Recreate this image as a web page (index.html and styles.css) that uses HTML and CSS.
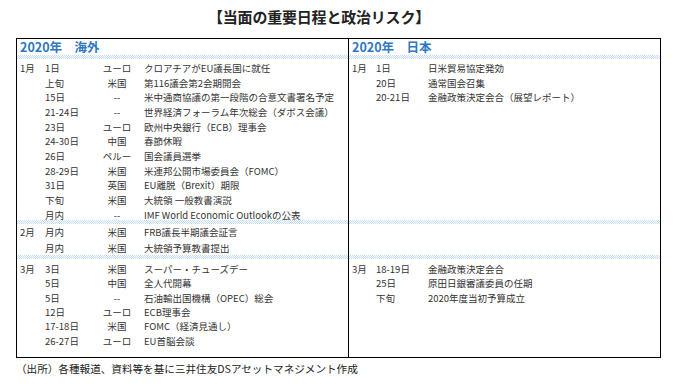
FILE: index.html
```html
<!DOCTYPE html>
<html lang="ja">
<head>
<meta charset="utf-8">
<link rel="stylesheet" href="styles.css">
</head>
<body>
<div class="page">
  <h1 class="title">【当面の重要日程と政治リスク】</h1>
  <div class="table">
    <div class="cell head">2020年　海外</div>
    <div class="cell head right">2020年　日本</div>
    <div class="cell band"></div>
    <div class="cell band right"></div>

    <div class="cell block jan">
      <div class="row"><span class="m">1月</span><span class="d">1日</span><span class="c">ユーロ</span><span class="e">クロアチアがEU議長国に就任</span></div>
      <div class="row"><span class="m"></span><span class="d">上旬</span><span class="c">米国</span><span class="e">第116議会第2会期開会</span></div>
      <div class="row"><span class="m"></span><span class="d">15日</span><span class="c">--</span><span class="e">米中通商協議の第一段階の合意文書署名予定</span></div>
      <div class="row"><span class="m"></span><span class="d">21-24日</span><span class="c">--</span><span class="e">世界経済フォーラム年次総会（ダボス会議）</span></div>
      <div class="row"><span class="m"></span><span class="d">23日</span><span class="c">ユーロ</span><span class="e">欧州中央銀行（ECB）理事会</span></div>
      <div class="row"><span class="m"></span><span class="d">24-30日</span><span class="c">中国</span><span class="e">春節休暇</span></div>
      <div class="row"><span class="m"></span><span class="d">26日</span><span class="c">ペルー</span><span class="e">国会議員選挙</span></div>
      <div class="row"><span class="m"></span><span class="d">28-29日</span><span class="c">米国</span><span class="e">米連邦公開市場委員会（FOMC）</span></div>
      <div class="row"><span class="m"></span><span class="d">31日</span><span class="c">英国</span><span class="e">EU離脱（Brexit）期限</span></div>
      <div class="row"><span class="m"></span><span class="d">下旬</span><span class="c">米国</span><span class="e">大統領 一般教書演説</span></div>
      <div class="row"><span class="m"></span><span class="d">月内</span><span class="c">--</span><span class="e">IMF World Economic Outlookの公表</span></div>
    </div>
    <div class="cell block jan right">
      <div class="row jp"><span class="m">1月</span><span class="d">1日</span><span class="e">日米貿易協定発効</span></div>
      <div class="row jp"><span class="m"></span><span class="d">20日</span><span class="e">通常国会召集</span></div>
      <div class="row jp"><span class="m"></span><span class="d">20-21日</span><span class="e">金融政策決定会合（展望レポート）</span></div>
    </div>
    <div class="cell band"></div>
    <div class="cell band right"></div>

    <div class="cell block feb">
      <div class="row"><span class="m">2月</span><span class="d">月内</span><span class="c">米国</span><span class="e">FRB議長半期議会証言</span></div>
      <div class="row"><span class="m"></span><span class="d">月内</span><span class="c">米国</span><span class="e">大統領予算教書提出</span></div>
    </div>
    <div class="cell block feb right"></div>
    <div class="cell band"></div>
    <div class="cell band right"></div>

    <div class="cell block mar">
      <div class="row"><span class="m">3月</span><span class="d">3日</span><span class="c">米国</span><span class="e">スーパー・チューズデー</span></div>
      <div class="row"><span class="m"></span><span class="d">5日</span><span class="c">中国</span><span class="e">全人代開幕</span></div>
      <div class="row"><span class="m"></span><span class="d">5日</span><span class="c">--</span><span class="e">石油輸出国機構（OPEC）総会</span></div>
      <div class="row"><span class="m"></span><span class="d">12日</span><span class="c">ユーロ</span><span class="e">ECB理事会</span></div>
      <div class="row"><span class="m"></span><span class="d">17-18日</span><span class="c">米国</span><span class="e">FOMC（経済見通し）</span></div>
      <div class="row"><span class="m"></span><span class="d">26-27日</span><span class="c">ユーロ</span><span class="e">EU首脳会談</span></div>
    </div>
    <div class="cell block mar right">
      <div class="row jp"><span class="m">3月</span><span class="d">18-19日</span><span class="e">金融政策決定会合</span></div>
      <div class="row jp"><span class="m"></span><span class="d">25日</span><span class="e">原田日銀審議委員の任期</span></div>
      <div class="row jp"><span class="m"></span><span class="d">下旬</span><span class="e">2020年度当初予算成立</span></div>
    </div>
  </div>
  <p class="source">（出所）各種報道、資料等を基に三井住友DSアセットマネジメント作成</p>
</div>
</body>
</html>
```

FILE: styles.css
```css
* { box-sizing: border-box; }
html, body { margin: 0; padding: 0; background: #fff; }
body {
  width: 691px;
  height: 390px;
  overflow: hidden;
  font-family: "Noto Sans CJK JP", "Noto Sans", sans-serif;
  color: #333;
}
.page { padding: 0; }
.title {
  margin: 0;
  height: 38px;
  padding-top: 7px;
  padding-left: 208px;
  font-size: 15px;
  line-height: 20px;
  font-weight: bold;
  color: #222;
  letter-spacing: -0.2px;
}
.table {
  margin-left: 16px;
  width: 645px;
  height: 320px;
  border: 1px solid #000;
  display: grid;
  grid-template-columns: 331px 312px;
  grid-template-rows: 16px 4px 161px 4px 31px 4px 98px;
}
.cell { min-width: 0; }
.right { border-left: 1px solid #000; }
.head {
  font-size: 12.5px;
  font-weight: bold;
  color: #2e78c2;
  line-height: 16px;
  padding-left: 3px;
  white-space: pre;
}
.band {
  background: repeating-conic-gradient(#c2dbf7 0 25%, #ffffff 0 50%) 0 0 / 2px 2px;
}
.block { font-size: 9.5px; }
.jan { padding-top: 1.6px; }
.jan .row { height: 14.7px; }
.feb { padding-top: 0; }
.feb .row { height: 16px; }
.mar { padding-top: 3px; }
.mar .row { height: 14.3px; }
.row {
  display: flex;
  align-items: center;
  white-space: nowrap;
}
.m { width: 28px; padding-left: 3px; flex: none; }
.d { width: 55px; flex: none; }
.c { width: 34px; text-align: center; flex: none; }
.e { padding-left: 10px; flex: none; }
.jp .m { width: 27px; }
.jp .d { width: 52px; }
.jp .e { padding-left: 0; }
.source {
  margin: 0;
  padding-left: 16px;
  padding-top: 4px;
  font-size: 10.6px;
  line-height: 14px;
  color: #222;
}
```
